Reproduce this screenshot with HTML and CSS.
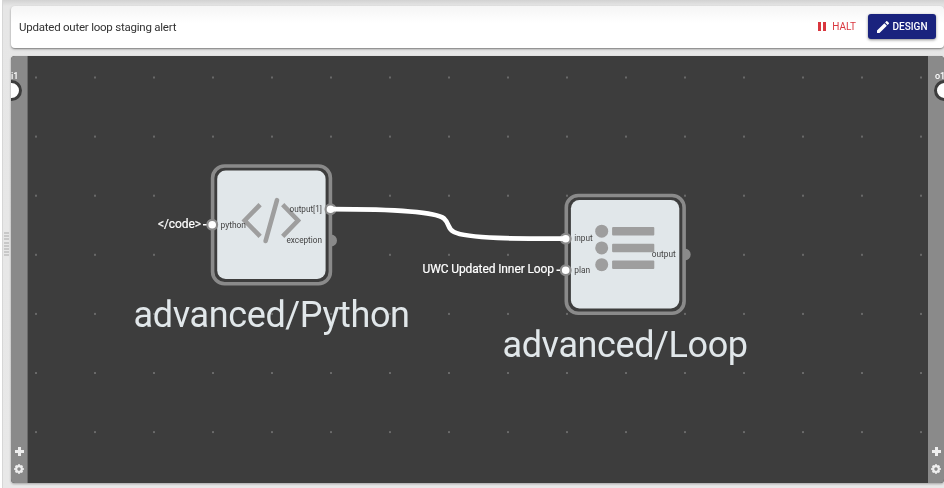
FILE: index.html
```html
<!DOCTYPE html>
<html lang="en">
<head>
<meta charset="utf-8">
<title>Flow editor</title>
<link rel="stylesheet" href="styles.css">
</head>
<body>
<div class="splitter"><div class="grip"></div></div>
<main class="page">
  <header class="bar">
    <span class="title">Updated outer loop staging alert</span>
    <button class="btn halt"><svg width="8" height="9" viewBox="0 0 8 9"><path d="M0 0h3v9H0zM5 0h3v9H5z"/></svg>HALT</button>
    <button class="btn design"><svg width="12" height="12" viewBox="3 3 18 18"><path d="M3 17.25V21h3.75L17.81 9.94l-3.75-3.75zM20.71 7.04a1 1 0 0 0 0-1.41l-2.34-2.34a1 1 0 0 0-1.41 0l-1.83 1.83 3.75 3.75z"/></svg>DESIGN</button>
  </header>
  <section class="editor">
    <aside class="rail rail-in">
      <span class="port-name">i1</span><span class="port"></span>
      <div class="tools">
        <svg width="9" height="9" viewBox="0 0 9 9"><path d="M3 0h3v3h3v3H6v3H3V6H0V3h3z"/></svg>
        <svg width="10" height="10" viewBox="-5 -5 10 10"><circle r="2.8" class="gear-ring"/><path class="gear-teeth" d="M0-4.8v1.5M0 4.8V3.3M-4.8 0h1.5M4.8 0H3.3M-3.4-3.4l1.1 1.1M3.4 3.4 2.3 2.3M-3.4 3.4l1.1-1.1M3.4-3.4 2.3-2.3"/></svg>
      </div>
    </aside>
    <svg class="graph" width="900" height="427" viewBox="28 56 900 427">
      <defs>
        <pattern id="dots" x="35" y="76.5" width="59" height="59.1" patternUnits="userSpaceOnUse"><rect y=".4" width="2" height="1.2" fill="#858585"/></pattern>
      </defs>
      <rect x="28" y="56" width="900" height="427" fill="url(#dots)"/>

      <g class="node" transform="translate(211 164)">
        <rect class="frame" x="1.6" y="2" width="117.8" height="117.8" rx="12"/>
        <rect class="face" x="6.2" y="6.5" width="108.4" height="108.4" rx="8.5"/>
        <path class="code-icon" d="M47.5 42.3 33.7 56.5 47.5 70.7M73.3 42.3 87 56.5 73.3 70.7"/>
        <path class="code-icon slash" d="M66 36.2 54.6 77"/>
        <text class="label" x="9.5" y="63.8" textLength="25.5" lengthAdjust="spacingAndGlyphs">python</text>
        <text class="label" x="78.5" y="47.8" textLength="32.5" lengthAdjust="spacingAndGlyphs">output[1]</text>
        <text class="label" x="75.5" y="79.2" textLength="35.5" lengthAdjust="spacingAndGlyphs">exception</text>
      </g>
      <text class="name" x="133.5" y="327.3" textLength="276.5">advanced/Python</text>

      <g class="node" transform="translate(564.7 193.5)">
        <rect class="frame" x="1.6" y="2" width="117.8" height="117.8" rx="12"/>
        <rect class="face" x="6.2" y="6.5" width="108.4" height="108.4" rx="8.5"/>
        <g class="list-icon">
          <circle cx="37" cy="37.7" r="6.5"/><circle cx="37" cy="54.4" r="6.5"/><circle cx="37" cy="71.2" r="6.5"/>
          <rect x="47.4" y="33.4" width="42.2" height="8.6" rx="1"/><rect x="47.4" y="50.2" width="42.2" height="8.6" rx="1"/><rect x="47.4" y="66.9" width="42.2" height="8.6" rx="1"/>
        </g>
        <text class="label" x="9.5" y="47.8" textLength="18.5" lengthAdjust="spacingAndGlyphs">input</text>
        <text class="label" x="9.5" y="79.2" textLength="16" lengthAdjust="spacingAndGlyphs">plan</text>
        <text class="label" x="87" y="63.8" textLength="24" lengthAdjust="spacingAndGlyphs">output</text>
      </g>
      <text class="name" x="502.5" y="357" textLength="245.5">advanced/Loop</text>

      <path class="half" d="M331 234.5a6 6 0 0 1 0 12zM684.7 248.4a6 6 0 0 1 0 12z"/>
      <g class="pin">
        <circle cx="212.2" cy="224.8" r="4.9"/><circle cx="330.5" cy="209.2" r="4.9"/>
        <circle cx="565.7" cy="238.7" r="4.9"/><circle cx="565.7" cy="270.2" r="4.9"/>
      </g>
      <path class="wire" d="M331 209.2C380 209.2 434 211 444 218.5C450 224 447 228.5 454 232C467 238.7 520 238.7 565 238.7"/>
      <path class="stub" d="M203 224.8h3.5M556.5 270.2h3.5"/>
      <text class="value" x="158" y="228.3" textLength="43">&lt;/code&gt;</text>
      <text class="value" x="422.5" y="273.3" textLength="131.5">UWC Updated Inner Loop</text>
    </svg>
    <aside class="rail rail-out">
      <span class="port-name">o1</span><span class="port"></span>
      <div class="tools">
        <svg width="9" height="9" viewBox="0 0 9 9"><path d="M3 0h3v3h3v3H6v3H3V6H0V3h3z"/></svg>
        <svg width="10" height="10" viewBox="-5 -5 10 10"><circle r="2.8" class="gear-ring"/><path class="gear-teeth" d="M0-4.8v1.5M0 4.8V3.3M-4.8 0h1.5M4.8 0H3.3M-3.4-3.4l1.1 1.1M3.4 3.4 2.3 2.3M-3.4 3.4l1.1-1.1M3.4-3.4 2.3-2.3"/></svg>
      </div>
    </aside>
  </section>
</main>
</body>
</html>
```
FILE: styles.css
```css
* { box-sizing: border-box; }
body {
  margin: 0;
  height: 488px;
  display: flex;
  overflow: hidden;
  font-family: Roboto, sans-serif;
  background: linear-gradient(#d2d2d2, #e6e6e6 6px, #e8e8e8);
}
.splitter {
  width: 11px;
  display: flex;
  align-items: center;
  padding-left: 4px;
  background: linear-gradient(90deg, #fff 2px, #d6d6d6 2px, #d6d6d6 3px, transparent 3px);
}
.grip {
  width: 5px;
  height: 25px;
  background: repeating-linear-gradient(#c8c8c8 0 2px, transparent 2px 3.2px);
}
.page {
  width: 933px;
  padding-top: 6px;
  display: flex;
  flex-direction: column;
  gap: 8.5px;
  filter: drop-shadow(0 1px 1px rgba(0, 0, 0, .3));
}
.bar {
  height: 41.5px;
  display: flex;
  align-items: center;
  padding: 0 8px;
  border-radius: 4px;
  background: linear-gradient(#f5f5f5, #fff 17px);
  box-shadow: 0 1px 1px rgba(0, 0, 0, .2);
}
.title { flex: 1; font-size: 11.5px; letter-spacing: -.23px; color: #333; }
.btn {
  display: flex;
  align-items: center;
  height: 25px;
  border: 0;
  border-radius: 3px;
  padding: 0;
  font: 500 10px Roboto, sans-serif;
  background: none;
}
.btn svg { fill: currentColor; }
.halt { gap: 6px; margin-right: 12px; color: #d9363e; font-weight: 400; }
.design {
  width: 68px;
  justify-content: center;
  gap: 4px;
  color: #fff;
  background: #1a237e;
  box-shadow: 0 1px 3px rgba(0, 0, 0, .45);
}
.editor {
  display: flex;
  height: 427px;
  overflow: hidden;
  border-radius: 4px;
  background: #3d3d3d;
}
.rail {
  position: relative;
  width: 17px;
  background: #8a8a8a;
  border-right: 1px solid #6a6a6a;
  display: flex;
  flex-direction: column;
  justify-content: flex-end;
  overflow: hidden;
}
.rail-out { width: 16px; border: 0; }
.port-name {
  position: absolute;
  top: 15px;
  left: 0;
  font-size: 9px;
  font-weight: 500;
  line-height: 11px;
  color: #fff;
}
.rail-out .port-name { left: 7px; }
.port {
  position: absolute;
  top: 23.5px;
  left: -11px;
  width: 21.5px;
  height: 21.5px;
  border: 3px solid #3d3d3d;
  border-radius: 50%;
  background: #fff;
}
.rail-out .port { left: 6px; }
.tools {
  display: flex;
  flex-direction: column;
  align-items: center;
  gap: 8px;
  padding-bottom: 9px;
  fill: #eee;
}
.tools svg { display: block; }
.gear-ring { fill: none; stroke: #eee; stroke-width: 2.2; }
.gear-teeth { fill: none; stroke: #eee; stroke-width: 2; }
.graph { display: block; flex: none; }
.frame { fill: #3d3d3d; stroke: #8a8a8a; stroke-width: 3.6; }
.face { fill: #e1e7ea; }
.code-icon { fill: none; stroke: #9e9e9e; stroke-width: 4.6; stroke-linecap: square; }
.slash { stroke-linecap: round; }
.list-icon { fill: #9e9e9e; }
.label { font-size: 9.4px; fill: #444; }
.name { font-size: 36px; fill: #e1e7ea; }
.value { font-size: 12px; fill: #fff; stroke: #fff; stroke-width: .2; }
.half { fill: #8a8a8a; }
.pin circle { fill: #fff; stroke: #8a8a8a; stroke-width: 2.2; }
.wire { fill: none; stroke: #fff; stroke-width: 4.7; }
.stub { stroke: #fff; stroke-width: 1.4; }
```
